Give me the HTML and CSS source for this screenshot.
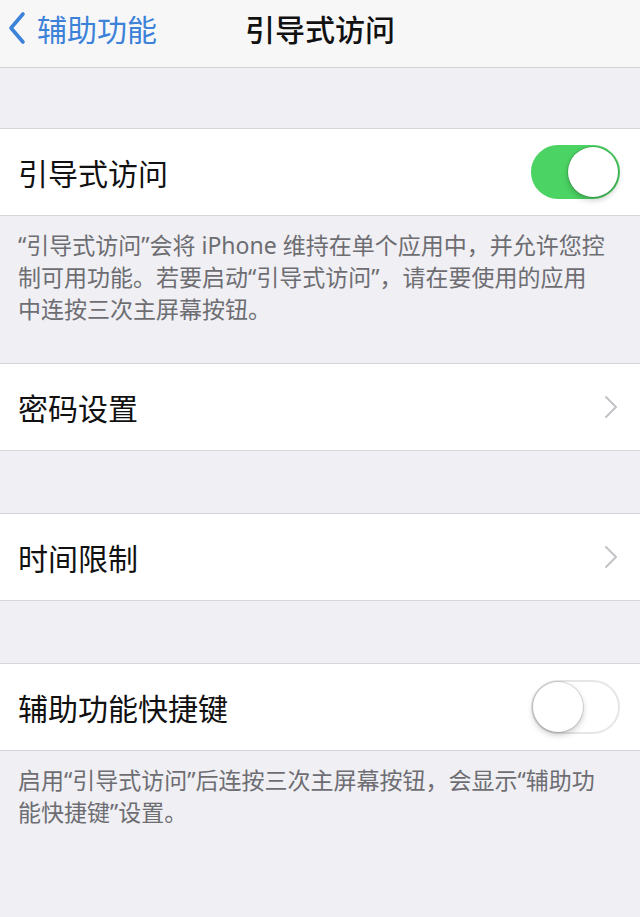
FILE: index.html
```html
<!DOCTYPE html>
<html lang="zh-CN">
  <head>
    <meta charset="UTF-8" />
    <meta name="viewport" content="width=device-width, initial-scale=1.0" />
    <title>引导式访问</title>
    <link rel="stylesheet" href="styles.css">
  </head>
  <body>
    <header class="navbar">
      <a class="back" href="#">
        <svg class="back-icon" viewBox="0 0 20 34" width="20" height="34">
          <path d="M16 3 L4 17 L16 31" fill="none" stroke="currentColor" stroke-width="3.6" stroke-linecap="round" stroke-linejoin="round" />
        </svg>
        <span>辅助功能</span>
      </a>
      <h1 class="title">引导式访问</h1>
      <div></div>
    </header>

    <main>
      <section class="group first">
        <div class="cell">
          <span class="label">引导式访问</span>
          <button class="switch on" aria-label="引导式访问"><span class="knob"></span></button>
        </div>
      </section>
      <p class="note note-tall">“引导式访问”会将 iPhone 维持在单个应用中，并允许您控制可用功能。若要启动“引导式访问”，请在要使用的应用中连按三次主屏幕按钮。</p>

      <section class="group">
        <a class="cell" href="#">
          <span class="label">密码设置</span>
          <svg class="chevron" viewBox="0 0 14 24" width="14" height="24">
            <path d="M2 2 L12 12 L2 22" fill="none" stroke="currentColor" stroke-width="2" stroke-linecap="round" stroke-linejoin="round" />
          </svg>
        </a>
      </section>

      <section class="group spaced">
        <a class="cell" href="#">
          <span class="label">时间限制</span>
          <svg class="chevron" viewBox="0 0 14 24" width="14" height="24">
            <path d="M2 2 L12 12 L2 22" fill="none" stroke="currentColor" stroke-width="2" stroke-linecap="round" stroke-linejoin="round" />
          </svg>
        </a>
      </section>

      <section class="group spaced">
        <div class="cell">
          <span class="label">辅助功能快捷键</span>
          <button class="switch" aria-label="辅助功能快捷键"><span class="knob"></span></button>
        </div>
      </section>
      <p class="note">启用“引导式访问”后连按三次主屏幕按钮，会显示“辅助功能快捷键”设置。</p>
    </main>
  </body>
</html>
```

FILE: styles.css
```css
* {
  margin: 0;
  padding: 0;
  box-sizing: border-box;
}
body {
  background-color: #efeff4;
  font-family: "Noto Sans CJK SC", "Noto Sans", sans-serif;
  color: #111;
  height: 917px;
  overflow: hidden;
}
a {
  color: inherit;
  text-decoration: none;
}

/* top bar */
.navbar {
  height: 68px;
  padding-bottom: 12px;
  background-color: #f7f7f8;
  border-bottom: 1px solid #cfcfd3;
  display: grid;
  grid-template-columns: 1fr auto 1fr;
  align-items: center;
}
.back {
  display: flex;
  align-items: center;
  gap: 10px;
  padding-left: 7px;
  color: #3b82d8;
  font-size: 30px;
}
.back-icon {
  display: block;
}
.title {
  font-size: 30px;
  font-weight: 500;
  color: #111;
}

/* table groups */
.group {
  background-color: #fff;
  border-top: 1px solid #d6d6da;
  border-bottom: 1px solid #d6d6da;
}
.group.first {
  margin-top: 60px;
}
.group.spaced {
  margin-top: 62px;
}
.cell {
  height: 86px;
  display: flex;
  align-items: center;
  justify-content: space-between;
  padding: 0 20px 0 18px;
}
.label {
  font-size: 30px;
  color: #111;
}
.chevron {
  color: #c4c4c8;
  margin-right: 2px;
}

/* switches */
.switch {
  position: relative;
  width: 89px;
  height: 54px;
  border-radius: 27px;
  border: 2px solid #e6e6e8;
  background-color: #fff;
}
.switch.on {
  background-color: #4bd463;
  border-color: #4bd463;
}
.knob {
  position: absolute;
  top: 0;
  left: 0;
  width: 50px;
  height: 50px;
  border-radius: 50%;
  background-color: #fff;
  box-shadow: 0 3px 6px rgba(0, 0, 0, 0.22), 0 0 0 1px rgba(0, 0, 0, 0.12);
}
.switch.on .knob {
  left: auto;
  right: 0;
}

/* footer notes: latin face first so quotes and "iPhone" stay narrow */
.note {
  font-family: "Noto Sans", "Noto Sans CJK SC", sans-serif;
  font-size: 23px;
  line-height: 32px;
  color: #6d6d72;
  padding: 13px 34px 0 18px;
}
.note-tall {
  height: 147px;
}
```
